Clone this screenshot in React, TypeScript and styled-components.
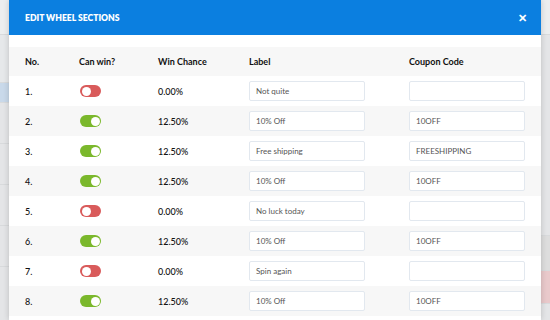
import React from "react";
import styled, { createGlobalStyle } from "styled-components";

const Global = createGlobalStyle`
  html, body { margin: 0; padding: 0; }
  body { background: #e2e4e6; font-family: Lato, "Open Sans", Arial, sans-serif; overflow: hidden; }
`;

const Page = styled.div`
  display: flex;
  width: 550px;
  height: 320px;
  overflow: hidden;
`;

const Side = styled.div<{ $w: number }>`
  width: ${(p) => p.$w}px;
  flex: none;
  display: flex;
  flex-direction: column;
  background: #e4e5e7;
`;

const SideBlock = styled.div<{ $h: number; $bg: string }>`
  height: ${(p) => p.$h}px;
  background: ${(p) => p.$bg};
  border-bottom: 1px solid #d8dadc;
  flex: none;
`;

const Modal = styled.div`
  width: 532px;
  flex: none;
  background: #fff;
  box-shadow: 0 0 6px rgba(0, 0, 0, 0.18);
  display: flex;
  flex-direction: column;
  position: relative;
  z-index: 1;
`;

const Header = styled.div`
  height: 35px;
  background: #0b7fe0;
  display: flex;
  align-items: center;
  justify-content: space-between;
  padding: 0 14px 0 16px;
  flex: none;
`;

const Title = styled.div`
  color: #fff;
  font-weight: 800;
  font-size: 8.6px;
`;

const Close = styled.div`
  color: #fff;
  font-weight: 900;
  font-size: 11px;
  line-height: 1;
`;

const Body = styled.div`
  padding-top: 12px;
  display: flex;
  flex-direction: column;
`;

const Row = styled.div<{ $shade?: boolean; $h: number }>`
  display: grid;
  grid-template-columns: 54px 79px 91px 160px 1fr;
  align-items: center;
  height: ${(p) => p.$h}px;
  padding: 0 16px;
  background: ${(p) => (p.$shade ? "#f7f7f7" : "#fff")};
  color: #111;
`;

const Th = styled.div`
  font-weight: 700;
  font-size: 9px;
`;

const Td = styled.div`
  font-size: 9px;
  font-weight: 500;
`;

const Input = styled.div<{ $w: number }>`
  width: ${(p) => p.$w}px;
  height: 20px;
  box-sizing: border-box;
  border: 1px solid #e2e8ef;
  border-radius: 2px;
  background: #fff;
  font-size: 8px;
  color: #555;
  display: flex;
  align-items: center;
  padding-left: 6px;
`;

const Toggle = styled.div<{ $on: boolean }>`
  width: 21px;
  height: 12px;
  border-radius: 6px;
  background: ${(p) => (p.$on ? "#7bb82c" : "#d95b5b")};
  display: flex;
  align-items: center;
  justify-content: ${(p) => (p.$on ? "flex-end" : "flex-start")};
  padding: 0 1.5px;
  box-sizing: border-box;
  margin-left: 1px;
`;

const Knob = styled.div`
  width: 9px;
  height: 9px;
  border-radius: 50%;
  background: #fff;
`;

const rows = [
  { on: false, chance: "0.00%", label: "Not quite", code: "" },
  { on: true, chance: "12.50%", label: "10% Off", code: "10OFF" },
  { on: true, chance: "12.50%", label: "Free shipping", code: "FREESHIPPING" },
  { on: true, chance: "12.50%", label: "10% Off", code: "10OFF" },
  { on: false, chance: "0.00%", label: "No luck today", code: "" },
  { on: true, chance: "12.50%", label: "10% Off", code: "10OFF" },
  { on: false, chance: "0.00%", label: "Spin again", code: "" },
  { on: true, chance: "12.50%", label: "10% Off", code: "10OFF" },
];

export default function App() {
  return (
    <Page>
      <Global />
      <Side $w={9}>
        <SideBlock $h={34} $bg="#eceeef" />
        <SideBlock $h={47} $bg="#e6e8ea" />
        <SideBlock $h={19} $bg="#c9d9ea" />
        <SideBlock $h={40} $bg="#e4e5e7" />
        <SideBlock $h={40} $bg="#e4e5e7" />
        <SideBlock $h={40} $bg="#e4e5e7" />
        <SideBlock $h={40} $bg="#e4e5e7" />
      </Side>
      <Modal>
        <Header>
          <Title>EDIT WHEEL SECTIONS</Title>
          <Close>✕</Close>
        </Header>
        <Body>
          <Row $shade $h={29}>
            <Th>No.</Th>
            <Th>Can win?</Th>
            <Th>Win Chance</Th>
            <Th>Label</Th>
            <Th>Coupon Code</Th>
          </Row>
          {rows.map((r, i) => (
            <Row key={i} $shade={i % 2 === 1} $h={30}>
              <Td>{i + 1}.</Td>
              <div>
                <Toggle $on={r.on}>
                  <Knob />
                </Toggle>
              </div>
              <Td>{r.chance}</Td>
              <div>
                <Input $w={116}>{r.label}</Input>
              </div>
              <div>
                <Input $w={116}>{r.code}</Input>
              </div>
            </Row>
          ))}
        </Body>
      </Modal>
      <Side $w={9}>
        <SideBlock $h={34} $bg="#eceeef" />
        <SideBlock $h={200} $bg="#e4e5e7" />
        <SideBlock $h={34} $bg="#ddd" />
        <SideBlock $h={32} $bg="#e9c9cb" />
      </Side>
    </Page>
  );
}
